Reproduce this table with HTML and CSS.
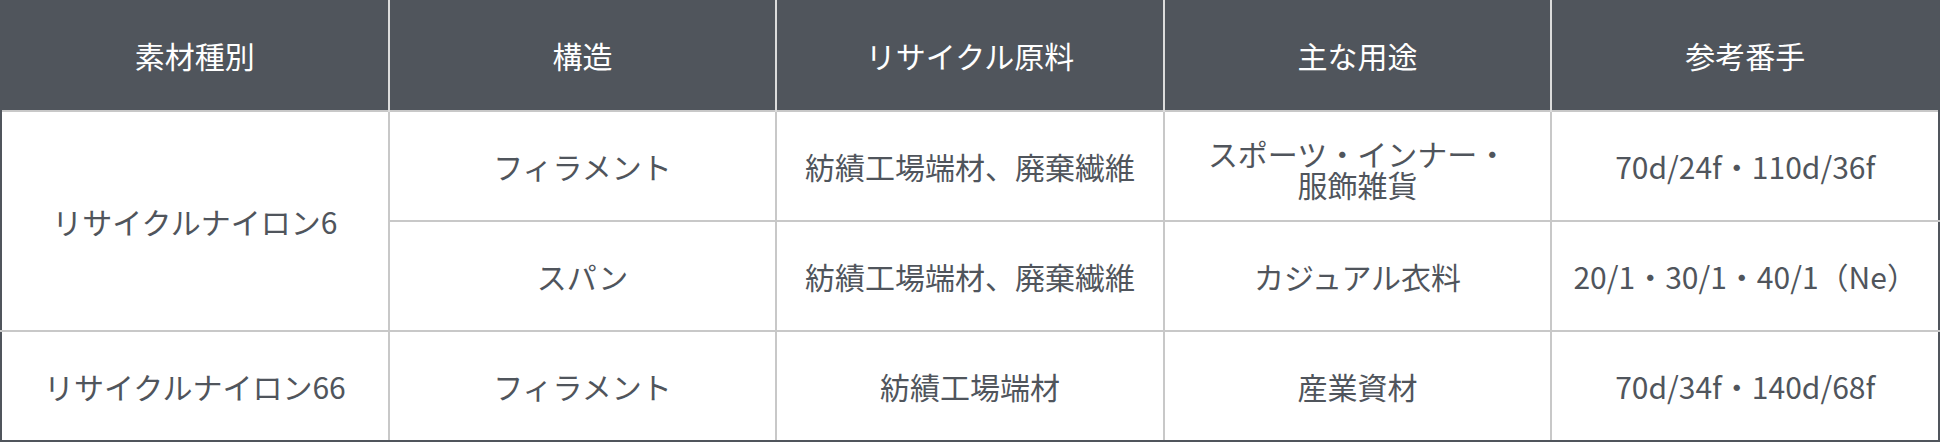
FILE: index.html
```html
<!DOCTYPE html>
<html lang="ja">
<head>
<meta charset="utf-8">
<link rel="stylesheet" href="styles.css">
</head>
<body>
<table class="spec">
  <colgroup>
    <col class="c"><col class="c"><col class="c"><col class="c"><col class="c">
  </colgroup>
  <thead>
    <tr>
      <th>素材種別</th>
      <th>構造</th>
      <th>リサイクル原料</th>
      <th>主な用途</th>
      <th>参考番手</th>
    </tr>
  </thead>
  <tbody>
    <tr>
      <td rowspan="2">リサイクルナイロン6</td>
      <td>フィラメント</td>
      <td>紡績工場端材、廃棄繊維</td>
      <td class="two"><span class="ln">スポーツ・インナー・</span><span class="ln">服飾雑貨</span></td>
      <td>70d/24f・110d/36f</td>
    </tr>
    <tr>
      <td>スパン</td>
      <td>紡績工場端材、廃棄繊維</td>
      <td>カジュアル衣料</td>
      <td>20/1・30/1・40/1（Ne）</td>
    </tr>
    <tr>
      <td>リサイクルナイロン66</td>
      <td>フィラメント</td>
      <td>紡績工場端材</td>
      <td>産業資材</td>
      <td>70d/34f・140d/68f</td>
    </tr>
  </tbody>
</table>
</body>
</html>
```

FILE: styles.css
```css
html, body {
  margin: 0;
  padding: 0;
  background: #ffffff;
}

.spec {
  width: 1940px;
  table-layout: fixed;
  border-collapse: collapse;
  font-family: "Noto Sans CJK JP", "Noto Sans", sans-serif;
  font-size: 30px;
  color: #50555c;
  border-left: 2px solid #50555c;
  border-right: 2px solid #50555c;
  border-bottom: 2px solid #50555c;
}

.spec .c {
  width: 20%;
}

.spec th {
  height: 110px;
  padding: 0;
  background: #50555c;
  color: #ffffff;
  font-weight: 400;
  text-align: center;
  vertical-align: middle;
  border-left: 2px solid #dcdcdc;
}

.spec th:first-child {
  border-left: none;
}

.spec td {
  height: 108px;
  padding: 0;
  text-align: center;
  vertical-align: middle;
  border: 2px solid #c8c8c8;
  line-height: 1.4;
}

.spec td.two {
  height: 102px;
  padding-top: 6px;
  line-height: 1.05;
}

.spec td.two .ln {
  display: block;
}

.spec tbody tr:last-child td {
  border-bottom: 2px solid #50555c;
}

.spec tbody tr td:last-child {
  border-right: 2px solid #50555c;
}

.spec tbody tr:first-child td:first-child,
.spec tbody tr:last-child td:first-child {
  border-left: 2px solid #50555c;
}
```
